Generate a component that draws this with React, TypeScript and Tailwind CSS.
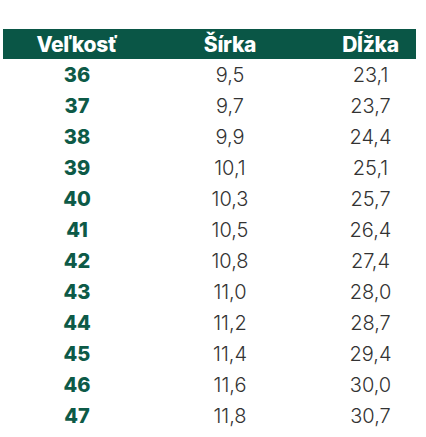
const rows: [string, string, string][] = [
  ["36", "9,5", "23,1"],
  ["37", "9,7", "23,7"],
  ["38", "9,9", "24,4"],
  ["39", "10,1", "25,1"],
  ["40", "10,3", "25,7"],
  ["41", "10,5", "26,4"],
  ["42", "10,8", "27,4"],
  ["43", "11,0", "28,0"],
  ["44", "11,2", "28,7"],
  ["45", "11,4", "29,4"],
  ["46", "11,6", "30,0"],
  ["47", "11,8", "30,7"],
];

export default function App() {
  return (
    <div className="w-[426px] h-[437px] bg-white pt-[29px] pl-[3px] font-['Inter',sans-serif]">
      <div className="w-[413px]">
        <div className="grid grid-cols-[148px_158px_1fr] h-[30px] items-center bg-[#0a5646] text-white text-[21px] font-extrabold tracking-[-0.3px] leading-none">
          <div className="text-center">Veľkosť</div>
          <div className="text-center">Šírka</div>
          <div className="text-center pl-[16px]">Dĺžka</div>
        </div>
        {rows.map(([size, width, length]) => (
          <div
            key={size}
            className="grid grid-cols-[148px_158px_1fr] h-[31px] items-center leading-none"
          >
            <div className="text-center text-[20px] font-extrabold text-[#0d5a47]">{size}</div>
            <div className="text-center text-[20px] font-light text-[#333333]">{width}</div>
            <div className="text-center pl-[16px] text-[20px] font-light text-[#333333]">{length}</div>
          </div>
        ))}
      </div>
    </div>
  );
}
